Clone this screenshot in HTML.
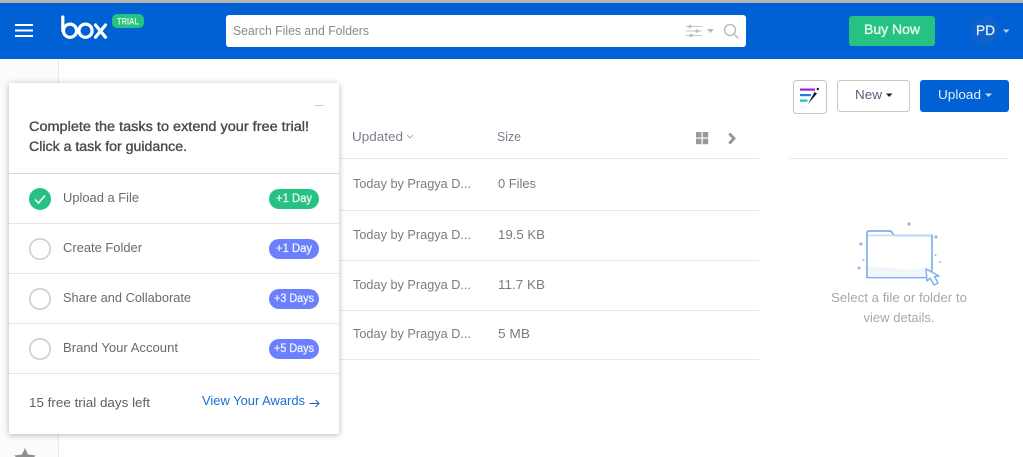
<!DOCTYPE html>
<html>
<head>
<meta charset="utf-8">
<style>
html,body{margin:0;padding:0;background:#fff;width:1023px;height:457px;overflow:hidden}
svg{display:block;position:absolute;left:0;top:0}
text{font-family:"Liberation Sans",sans-serif}
#panel{position:absolute;left:9px;top:83px;width:330px;height:351px;background:#fff;box-shadow:0 1px 6px rgba(0,0,0,.28)}
</style>
</head>
<body>
<svg width="1023" height="457" viewBox="0 0 1023 457" style="z-index:1">
  <rect x="0" y="0" width="59" height="457" fill="#fbfbfb"/>
  <rect x="58" y="59" width="1" height="398" fill="#e8e8e8"/>
  <rect x="0" y="0" width="1023" height="3" fill="#b4b4b4"/>
  <rect x="0" y="3" width="1023" height="56" fill="#0061d5"/>
  <!-- hamburger -->
  <g fill="#fff"><rect x="15" y="24" width="18" height="2"/><rect x="15" y="29.5" width="18" height="2"/><rect x="15" y="35" width="18" height="2"/></g>
  <!-- box logo -->
  <g fill="none" stroke="#fff" stroke-width="3.2" stroke-linecap="round">
    <path d="M62.8 17V30.5"/>
    <circle cx="70" cy="30.7" r="6.6"/>
    <circle cx="85.5" cy="30.7" r="6.6"/>
    <path d="M95.5 25L105.5 37.2M105.5 25L95.5 37.2"/>
  </g>
  <rect x="112" y="14" width="32" height="14" rx="5" fill="#26c281"/>
  <text x="117" y="24.5" font-size="9" font-weight="bold" fill="#d8f5e8" textLength="22" lengthAdjust="spacingAndGlyphs">TRIAL</text>
  <!-- search -->
  <rect x="226" y="15" width="520" height="32" rx="3" fill="#fff"/>
  <text x="233" y="35" font-size="13" fill="#8a8a8a" textLength="136" lengthAdjust="spacingAndGlyphs">Search Files and Folders</text>
  <g stroke="#c4c4c4" stroke-width="1" fill="#b0b0b0">
    <path d="M686 26.5H702M686 31H702M686 35.5H702"/>
    <circle cx="690" cy="26.5" r="1.2"/><circle cx="697" cy="31" r="1.2"/><circle cx="691" cy="35.5" r="1.2"/>
  </g>
  <path d="M707 29H714L710.5 33Z" fill="#b8b8b8"/>
  <g fill="none" stroke="#bdbdbd" stroke-width="1.5"><circle cx="730" cy="30" r="5.5"/><path d="M734 34L738 38" stroke-linecap="round"/></g>
  <!-- buy now -->
  <rect x="849" y="16" width="86" height="30" rx="3" fill="#26c281"/>
  <text x="864" y="34" font-size="13.5" stroke="#e6f8ef" stroke-width=".35" fill="#e6f8ef" textLength="56" lengthAdjust="spacingAndGlyphs">Buy Now</text>
  <circle cx="985" cy="30.5" r="14" fill="#1162c8"/>
  <text x="976" y="35" font-size="13.5" stroke="#e8f0fb" stroke-width=".3" fill="#e8f0fb" textLength="19" lengthAdjust="spacingAndGlyphs">PD</text>
  <path d="M1003 29.5H1009.5L1006.2 33Z" fill="#b9d1f0"/>
  <!-- toolbar -->
  <rect x="793.5" y="80.5" width="33" height="33" rx="3" fill="#fff" stroke="#c4c4c4"/>
  <rect x="800" y="88.5" width="15" height="2.2" fill="#a31fd8"/>
  <rect x="800" y="94" width="11" height="2.2" fill="#1f7fe0"/>
  <rect x="800" y="99.5" width="7.5" height="2.2" fill="#12c7c0"/>
  <path d="M808 104L814.5 92L817 93.5Z" fill="#14143c"/>
  <circle cx="817.8" cy="89" r="1.2" fill="#14143c"/>
  <rect x="837.5" y="80.5" width="72" height="31" rx="3" fill="#fff" stroke="#c8c8c8"/>
  <text x="855" y="99" font-size="13" fill="#5a5f78" textLength="27" lengthAdjust="spacingAndGlyphs">New</text>
  <path d="M886 93.5H892.5L889.2 97Z" fill="#222"/>
  <rect x="920" y="80" width="89" height="32" rx="3" fill="#0061d5"/>
  <text x="938" y="99" font-size="13" fill="#e6effb" textLength="43" lengthAdjust="spacingAndGlyphs">Upload</text>
  <path d="M985 93.5H992L988.5 97Z" fill="#c8dcf5"/>
  <!-- table head -->
  <text x="352" y="141" font-size="13" fill="#7a7f8f" textLength="51" lengthAdjust="spacingAndGlyphs">Updated</text>
  <path d="M407 135L410 138L413 135" fill="none" stroke="#999" stroke-width=".8"/>
  <text x="497" y="141" font-size="13" fill="#7a7f8f" textLength="24" lengthAdjust="spacingAndGlyphs">Size</text>
  <g fill="#9a9a9a"><rect x="696" y="132" width="5.5" height="5.5"/><rect x="702.7" y="132" width="5.5" height="5.5"/><rect x="696" y="138.7" width="5.5" height="5.5"/><rect x="702.7" y="138.7" width="5.5" height="5.5"/></g>
  <path d="M729.3 133.5L734 138.5L729.3 143.5" fill="none" stroke="#969696" stroke-width="2.8"/>
  <g fill="#e8e8e8">
    <rect x="340" y="158" width="419" height="1"/><rect x="340" y="210" width="419" height="1"/>
    <rect x="340" y="260" width="419" height="1"/><rect x="340" y="310" width="419" height="1"/>
    <rect x="340" y="359" width="419" height="1"/><rect x="789" y="158" width="220" height="1"/>
  </g>
  <g font-size="13" fill="#7c7c7c">
    <text x="353" y="188" textLength="118" lengthAdjust="spacingAndGlyphs">Today by Pragya D...</text>
    <text x="353" y="239" textLength="118" lengthAdjust="spacingAndGlyphs">Today by Pragya D...</text>
    <text x="353" y="289" textLength="118" lengthAdjust="spacingAndGlyphs">Today by Pragya D...</text>
    <text x="353" y="338" textLength="118" lengthAdjust="spacingAndGlyphs">Today by Pragya D...</text>
    <text x="498" y="188" textLength="38" lengthAdjust="spacingAndGlyphs">0 Files</text>
    <text x="498" y="239" textLength="47" lengthAdjust="spacingAndGlyphs">19.5 KB</text>
    <text x="498" y="289" textLength="47" lengthAdjust="spacingAndGlyphs">11.7 KB</text>
    <text x="498" y="338" textLength="32" lengthAdjust="spacingAndGlyphs">5 MB</text>
  </g>
  <!-- empty state illustration -->
  <path d="M867 266V277.5H932V235.5H894L892 232.5Q891.5 231 889 231H869Q867 231 867 233V266Z" fill="#fff" stroke="#7fb0ea" stroke-width="1.7"/>
  <path d="M868 235.5H931" stroke="#c4dbf6" stroke-width="1.5"/>
  <path d="M868 266.5Q885 267 900 269Q918 270 931 267V277H868Z" fill="#f1f6fd"/>
  <path d="M926 269L927 281L930 278L934 285L938 283L934.5 276.5L939 276Z" fill="#fff" stroke="#7fb0ea" stroke-width="1.5" stroke-linejoin="round"/>
  <g fill="#8fbaec">
    <circle cx="909" cy="224" r="1.6"/><circle cx="861" cy="244" r="1.6"/><circle cx="936" cy="237" r="1.6"/>
    <circle cx="859" cy="268" r="1.5"/><circle cx="863.5" cy="260" r="1"/><circle cx="935.5" cy="255" r="1"/><circle cx="940" cy="262" r="1"/>
  </g>
  <text x="831" y="302" font-size="13" fill="#a8a8a8" textLength="136" lengthAdjust="spacingAndGlyphs">Select a file or folder to</text>
  <text x="863.5" y="322" font-size="13" fill="#a8a8a8" textLength="71" lengthAdjust="spacingAndGlyphs">view details.</text>
  <!-- star -->
  <path d="M25 448L28 454.5L36 455.5L30 460L31.5 468H18.5L20 460L14 455.5L22 454.5Z" fill="#8e8e8e"/>
</svg>
<div id="panel" style="z-index:2"></div>
<svg width="1023" height="457" viewBox="0 0 1023 457" style="z-index:3">
  <rect x="315" y="105" width="9" height="1" fill="#cfcfcf"/>
  <text x="29" y="131" font-size="13.5" stroke="#4a4a4a" stroke-width=".35" fill="#4a4a4a" textLength="280" lengthAdjust="spacingAndGlyphs">Complete the tasks to extend your free trial!</text>
  <text x="29" y="151" font-size="13.5" stroke="#4a4a4a" stroke-width=".35" fill="#4a4a4a" textLength="158" lengthAdjust="spacingAndGlyphs">Click a task for guidance.</text>
  <g fill="#e6e6e6">
    <rect x="9" y="173" width="330" height="1" fill="#d6d6d6"/><rect x="9" y="223" width="330" height="1"/>
    <rect x="9" y="273" width="330" height="1"/><rect x="9" y="323" width="330" height="1"/><rect x="9" y="373" width="330" height="1"/>
  </g>
  <circle cx="40" cy="199" r="11" fill="#26c281"/>
  <path d="M35 199.5L38.5 203L45 195.5" fill="none" stroke="#fff" stroke-width="1.5"/>
  <g fill="#fff" stroke="#d3d3d3" stroke-width="1.8">
    <circle cx="40" cy="249" r="10.2"/><circle cx="40" cy="299" r="10.2"/><circle cx="40" cy="349" r="10.2"/>
  </g>
  <g font-size="13" fill="#6a6a6a">
    <text x="63" y="202" textLength="76" lengthAdjust="spacingAndGlyphs">Upload a File</text>
    <text x="63" y="252" textLength="79" lengthAdjust="spacingAndGlyphs">Create Folder</text>
    <text x="63" y="302" textLength="128" lengthAdjust="spacingAndGlyphs">Share and Collaborate</text>
    <text x="63" y="352" textLength="115" lengthAdjust="spacingAndGlyphs">Brand Your Account</text>
  </g>
  <rect x="269" y="189" width="50" height="20" rx="10" fill="#26c281"/>
  <rect x="269" y="239" width="50" height="20" rx="10" fill="#6b7fff"/>
  <rect x="269" y="289" width="50" height="20" rx="10" fill="#6b7fff"/>
  <rect x="269" y="339" width="50" height="20" rx="10" fill="#6b7fff"/>
  <g font-size="11.5" stroke="#eef2ff" stroke-width=".3" fill="#eef2ff">
    <text x="276" y="202" textLength="36" lengthAdjust="spacingAndGlyphs">+1 Day</text>
    <text x="276" y="252" textLength="36" lengthAdjust="spacingAndGlyphs">+1 Day</text>
    <text x="274" y="302" textLength="40" lengthAdjust="spacingAndGlyphs">+3 Days</text>
    <text x="274" y="352" textLength="40" lengthAdjust="spacingAndGlyphs">+5 Days</text>
  </g>
  <text x="29" y="407" font-size="13" fill="#5f5f5f" textLength="121" lengthAdjust="spacingAndGlyphs">15 free trial days left</text>
  <text x="202" y="405" font-size="13" fill="#1a6fd6" textLength="103" lengthAdjust="spacingAndGlyphs">View Your Awards</text>
  <path d="M309.5 403.5H319M315.5 400L319 403.5L315.5 407" fill="none" stroke="#2a5db0" stroke-width="1"/>
</svg>
</body>
</html>
